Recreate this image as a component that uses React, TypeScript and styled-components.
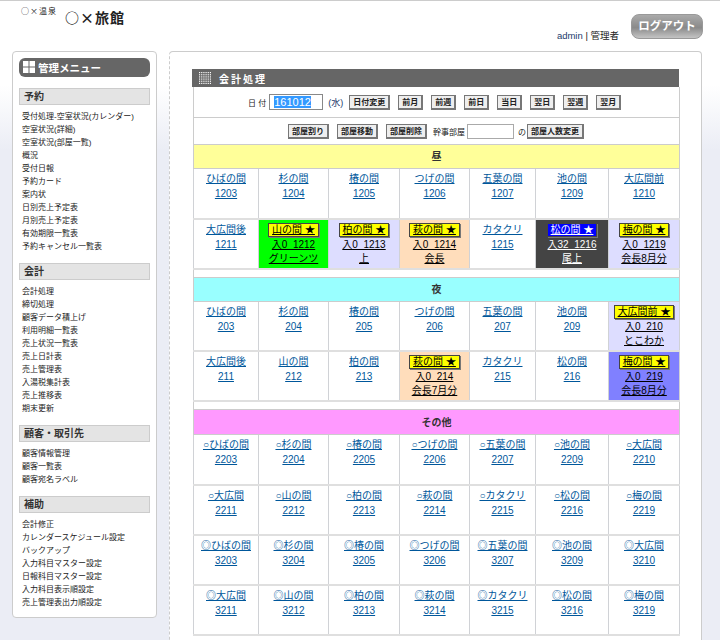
import styled, { createGlobalStyle } from "styled-components";

const GlobalStyle = createGlobalStyle`
    html, body {
        margin: 0;
        height: 640px;
        overflow: hidden;
    }
    body {
        font-family: "Liberation Sans", "Noto Sans CJK JP", sans-serif;
        font-size: 10px;
        color: #222;
        background: linear-gradient(#fff 0, #fff 85px, #ebedf5 150px) no-repeat #ebedf5;
    }
`

const Page = styled.div`
    height: 639px;
    border-top: 1px solid #ccc;
    overflow: hidden;
`

const Header = styled.header`
    height: 50px;
    padding: 0 17px 0 21px;
    display: flex;
    justify-content: space-between;
    box-sizing: border-box;
`

const Logo = styled.div`
    display: flex;
    gap: 10px;
    align-items: flex-start;
    font-family: "Noto Sans CJK JP", sans-serif;
    & small {
        width: 34px;
        font-size: 8px;
        line-height: 9px;
        margin-top: 5px;
        letter-spacing: 1px;
        white-space: nowrap;
    }
    & strong {
        font-size: 14px;
        line-height: 16px;
        margin-top: 8px;
        letter-spacing: 1px;
    }
`

const UserBox = styled.div`
    display: flex;
    gap: 12px;
    align-items: flex-start;
    & p {
        margin: 29px 0 0;
        font-size: 9.5px;
        line-height: 12px;
    }
    & span { color: #1b3a6b; }
`

const LogoutButton = styled.button`
    width: 72px;
    height: 25px;
    margin-top: 13px;
    padding: 0 0 3px;
    border: 1px solid #999;
    border-radius: 8px;
    background: linear-gradient(#aaa, #8a8a8a 55%, #c4c4c4);
    color: #fff;
    font: bold 11.5px "Liberation Sans", "Noto Sans CJK JP", sans-serif;
`

const Columns = styled.div`
    display: flex;
    gap: 12px;
    padding-left: 12px;
    align-items: flex-start;
`

const Sidebar = styled.nav`
    width: 145px;
    height: 567px;
    padding: 6px 6px 0;
    box-sizing: border-box;
    background: #fff;
    border: 1px solid #ccc;
    border-radius: 4px;
`

const SideTitle = styled.h2`
    margin: 0 0 11px;
    height: 19px;
    padding-left: 4px;
    display: flex;
    align-items: center;
    gap: 2px;
    background: #666;
    border-radius: 6px;
    color: #fff;
    font-size: 10.5px;
`

const Section = styled.section`
    margin-bottom: 10px;
`

const SectionTitle = styled.h3`
    margin: 0 0 5px;
    height: 17px;
    box-sizing: border-box;
    padding-left: 4px;
    background: #e4e4e4;
    border: 1px solid #ccc;
    font-size: 10px;
    line-height: 15px;
    color: #333;
`

const MenuItem = styled.div`
    height: 13px;
    padding-left: 3px;
    font-size: 8px;
    line-height: 13px;
    color: #222;
    white-space: nowrap;
`

const Main = styled.main`
    width: 533px;
    height: 640px;
    padding: 17px 22px 0 22px;
    box-sizing: border-box;
    background: #fff;
    border: 1px solid #ccc;
    border-left-style: dashed;
    border-radius: 4px 4px 0 0;
`

const MainTitle = styled.h1`
    margin: 0;
    width: 487px;
    height: 18px;
    padding-left: 7px;
    box-sizing: border-box;
    display: flex;
    align-items: center;
    gap: 7px;
    background: #666;
    color: #fff;
    font-size: 10px;
    letter-spacing: 2px;
`

const Table = styled.table`
    width: 487px;
    table-layout: fixed;
    border-collapse: collapse;
    margin-left: 1px;
    border-left: 1px solid #ccc;
    border-right: 1px solid #ccc;
`

const FormCell = styled.td<{ $h: number }>`
    height: ${p => p.$h}px;
    padding: 0;
    border-bottom: 1px solid #ccc;
`

const FormRow = styled.div<{ $left: number }>`
    display: flex;
    align-items: center;
    gap: 6px;
    padding-left: ${p => p.$left}px;
    font-size: 8px;
    & .sat { color: #1b3a6b; font-size: 9px; margin-left: -1px; }
`

const SmallButton = styled.button`
    height: 15px;
    padding: 0 3px;
    border: 1px solid #777;
    border-right-width: 2px;
    border-bottom-width: 2px;
    background: #eee;
    font: bold 8px "Liberation Sans", "Noto Sans CJK JP", sans-serif;
    color: #222;
    white-space: nowrap;

    & + & {
        margin-left: 2px;
    }
`

const DateBox = styled.div`
    width: 54px;
    height: 16px;
    margin-left: -3px;
    box-sizing: border-box;
    padding: 1px 0 0 4px;
    border: 1px solid #888;
    font-size: 11px;
    line-height: 12px;
    & span { background: #3399ff; color: #fff; }
`

const EmptyInput = styled.input`
    width: 47px;
    height: 15px;
    padding: 0;
    margin: 0 -2px 0 -4px;
    box-sizing: border-box;
    border: 1px solid #aaa;
`

const Joiner = styled.span`
    margin-right: -5px;
`

const BandCell = styled.td<{ $color: string; $h: number }>`
    height: ${p => p.$h - 2}px;
    padding: 0 0 2px;
    background: ${p => p.$color};
    border-top: 1px solid #ccc;
    border-bottom: 1px solid #ccc;
    text-align: center;
    font-weight: bold;
    font-size: 10px;
    color: #333;
`

const GapCell = styled.td`
    height: 7px;
    padding: 0;
`

const RoomCell = styled.td<{ $bg?: string; $light?: boolean }>`
    height: 50px;
    padding: 2px 0 0;
    box-sizing: border-box;
    vertical-align: top;
    text-align: center;
    border: 1px solid #d0d2d6;
    border-bottom: 2px solid #dfdfdf;
    background: ${p => p.$bg || "#fff"};
    color: ${p => (p.$light ? "#fff" : "#000")};
    font-size: 10px;
    line-height: 15px;
    & a {
        display: block;
        color: #00579b;
        text-decoration: underline;
    }
`

const BookedLine = styled.div`
    text-decoration: underline;
    white-space: nowrap;
    line-height: 14px;
`

const Badge = styled.span<{ $blue?: boolean }>`
    display: inline-block;
    padding: 0 3px;
    line-height: 12px;
    margin: 1px 0;
    border: 1px solid #444;
    box-shadow: 1px 1px 0 #777;
    background: ${p => (p.$blue ? "#0000ff" : "#ffff00")};
    color: ${p => (p.$blue ? "#fff" : "#000")};
    text-decoration: underline;
    white-space: nowrap;
`

type Booking = {
    badge: string;
    line: string;
    who: string;
    bg: string;
    blue?: boolean;
    light?: boolean;
};

type Room = {
    name: string;
    no: string;
    booking?: Booking;
};

const row1 = ["ひばの間", "杉の間", "椿の間", "つげの間", "五葉の間", "池の間", "大広間前"];
const row2 = ["大広間後", "山の間", "柏の間", "萩の間", "カタクリ", "松の間", "梅の間"];
const suffix1 = ["03", "04", "05", "06", "07", "09", "10"];
const suffix2 = ["11", "12", "13", "14", "15", "16", "19"];

const makeRow = (names: string[], suffix: string[], prefix: string, mark = ""): Room[] =>
    names.map((name, i) => ({
        // the marked rooms drop the 前/後 of the big hall
        name: mark ? mark + name.replace(/^大広間./, "大広間") : name,
        no: prefix + suffix[i],
    }));

const withBookings = (rooms: Room[], map: Record<number, Booking>): Room[] =>
    rooms.map((room, i) => (map[i] ? { ...room, booking: map[i] } : room));

const GREEN = "#00ff00";
const LAVENDER = "#ddddff";
const PEACH = "#ffddbb";
const DARK = "#444444";
const PURPLE = "#8080ff";

const dayRows: Room[][] = [
    makeRow(row1, suffix1, "12"),
    withBookings(makeRow(row2, suffix2, "12"), {
        1: { badge: "山の間 ★", line: "入0\u00a0\u00a01212", who: "グリーンツ", bg: GREEN },
        2: { badge: "柏の間 ★", line: "入0\u00a0\u00a01213", who: "上", bg: LAVENDER },
        3: { badge: "萩の間 ★", line: "入0\u00a0\u00a01214", who: "会長", bg: PEACH },
        5: { badge: "松の間 ★", line: "入32\u00a0\u00a01216", who: "尾上", bg: DARK, blue: true, light: true },
        6: { badge: "梅の間 ★", line: "入0\u00a0\u00a01219", who: "会長8月分", bg: LAVENDER },
    }),
];

const nightRows: Room[][] = [
    withBookings(makeRow(row1, suffix1, "2"), {
        6: { badge: "大広間前 ★", line: "入0\u00a0\u00a0210", who: "とこわか", bg: LAVENDER },
    }),
    withBookings(makeRow(row2, suffix2, "2"), {
        3: { badge: "萩の間 ★", line: "入0\u00a0\u00a0214", who: "会長7月分", bg: PEACH },
        6: { badge: "梅の間 ★", line: "入0\u00a0\u00a0219", who: "会長8月分", bg: PURPLE },
    }),
];

const otherRows: Room[][] = [
    makeRow(row1, suffix1, "22", "○"),
    makeRow(row2, suffix2, "22", "○"),
    makeRow(row1, suffix1, "32", "◎"),
    makeRow(row2, suffix2, "32", "◎"),
];

const menu = [
    {
        title: "予約",
        items: ["受付処理-空室状況(カレンダー)", "空室状況(詳細)", "空室状況(部屋一覧)", "概況", "受付日報", "予約カード", "案内状", "日別売上予定表", "月別売上予定表", "有効期限一覧表", "予約キャンセル一覧表"],
    },
    {
        title: "会計",
        items: ["会計処理", "締切処理", "顧客データ積上げ", "利用明細一覧表", "売上状況一覧表", "売上日計表", "売上管理表", "入湯税集計表", "売上推移表", "期末更新"],
    },
    {
        title: "顧客・取引先",
        items: ["顧客情報管理", "顧客一覧表", "顧客宛名ラベル"],
    },
    {
        title: "補助",
        items: ["会計修正", "カレンダースケジュール設定", "バックアップ", "入力科目マスター設定", "日報科目マスター設定", "入力科目表示順設定", "売上管理表出力順設定"],
    },
];

const colWidths = [65, 70, 71, 70, 66, 73, 71];

function RoomRows({ rows }: { rows: Room[][] }) {
    return (
        <>
            {rows.map((rooms, r) => (
                <tr key={r}>
                    {rooms.map(room =>
                        room.booking ? (
                            <RoomCell key={room.no} $bg={room.booking.bg} $light={room.booking.light}>
                                <Badge $blue={room.booking.blue}>{room.booking.badge}</Badge>
                                <BookedLine>{room.booking.line}</BookedLine>
                                <BookedLine>{room.booking.who}</BookedLine>
                            </RoomCell>
                        ) : (
                            <RoomCell key={room.no}>
                                <a href="#">{room.name}</a>
                                <a href="#">{room.no}</a>
                            </RoomCell>
                        )
                    )}
                </tr>
            ))}
        </>
    )
}

function GridIcon({ n, size }: { n: number; size: number }) {
    const step = size / n;
    const cells = [];
    for (let y = 0; y < n; y++) {
        for (let x = 0; x < n; x++) {
            cells.push(<rect key={`${x}-${y}`} x={x * step} y={y * step} width={step - 1} height={step - 1} fill="#fff" />);
        }
    }
    return <svg width={size} height={size}>{cells}</svg>;
}

function Band({ color, label, h = 23 }: { color: string; label: string; h?: number }) {
    return (
        <tr>
            <BandCell colSpan={7} $color={color} $h={h}>{label}</BandCell>
        </tr>
    )
}

function Gap() {
    return (
        <tr>
            <GapCell colSpan={7} />
        </tr>
    )
}

export default function App() {
    return (
        <Page>
            <GlobalStyle />
            <Header>
                <Logo>
                    <small>○×温泉</small>
                    <strong>○×旅館</strong>
                </Logo>
                <UserBox>
                    <p><span>admin</span> | 管理者</p>
                    <LogoutButton>ログアウト</LogoutButton>
                </UserBox>
            </Header>
            <Columns>
                <Sidebar>
                    <SideTitle><GridIcon n={2} size={13} />管理メニュー</SideTitle>
                    {menu.map(section => (
                        <Section key={section.title}>
                            <SectionTitle>{section.title}</SectionTitle>
                            {section.items.map(item => <MenuItem key={item}>{item}</MenuItem>)}
                        </Section>
                    ))}
                </Sidebar>
                <Main>
                    <MainTitle><GridIcon n={6} size={13} />会計処理</MainTitle>
                    <Table>
                        <colgroup>
                            {colWidths.map((w, i) => <col key={i} style={{ width: w }} />)}
                        </colgroup>
                        <tbody>
                            <tr>
                                <FormCell colSpan={7} $h={30}>
                                    <FormRow $left={54}>
                                        日 付
                                        <DateBox><span>161012</span></DateBox>
                                        <span className="sat">(水)</span>
                                        <SmallButton>日付変更</SmallButton>
                                        <SmallButton>前月</SmallButton>
                                        <SmallButton>前週</SmallButton>
                                        <SmallButton>前日</SmallButton>
                                        <SmallButton>当日</SmallButton>
                                        <SmallButton>翌日</SmallButton>
                                        <SmallButton>翌週</SmallButton>
                                        <SmallButton>翌月</SmallButton>
                                    </FormRow>
                                </FormCell>
                            </tr>
                            <tr>
                                <FormCell colSpan={7} $h={26}>
                                    <FormRow $left={94}>
                                        <SmallButton>部屋割り</SmallButton>
                                        <SmallButton>部屋移動</SmallButton>
                                        <SmallButton>部屋削除</SmallButton>
                                        幹事部屋
                                        <EmptyInput />
                                        <Joiner>の</Joiner>
                                        <SmallButton>部屋人数変更</SmallButton>
                                    </FormRow>
                                </FormCell>
                            </tr>
                            <Band color="#ffff99" label="昼" />
                            <RoomRows rows={dayRows} />
                            <Gap />
                            <Band color="#99ffff" label="夜" />
                            <RoomRows rows={nightRows} />
                            <Gap />
                            <Band color="#ff99ff" label="その他" h={24} />
                            <RoomRows rows={otherRows} />
                        </tbody>
                    </Table>
                </Main>
            </Columns>
        </Page>
    )
}
